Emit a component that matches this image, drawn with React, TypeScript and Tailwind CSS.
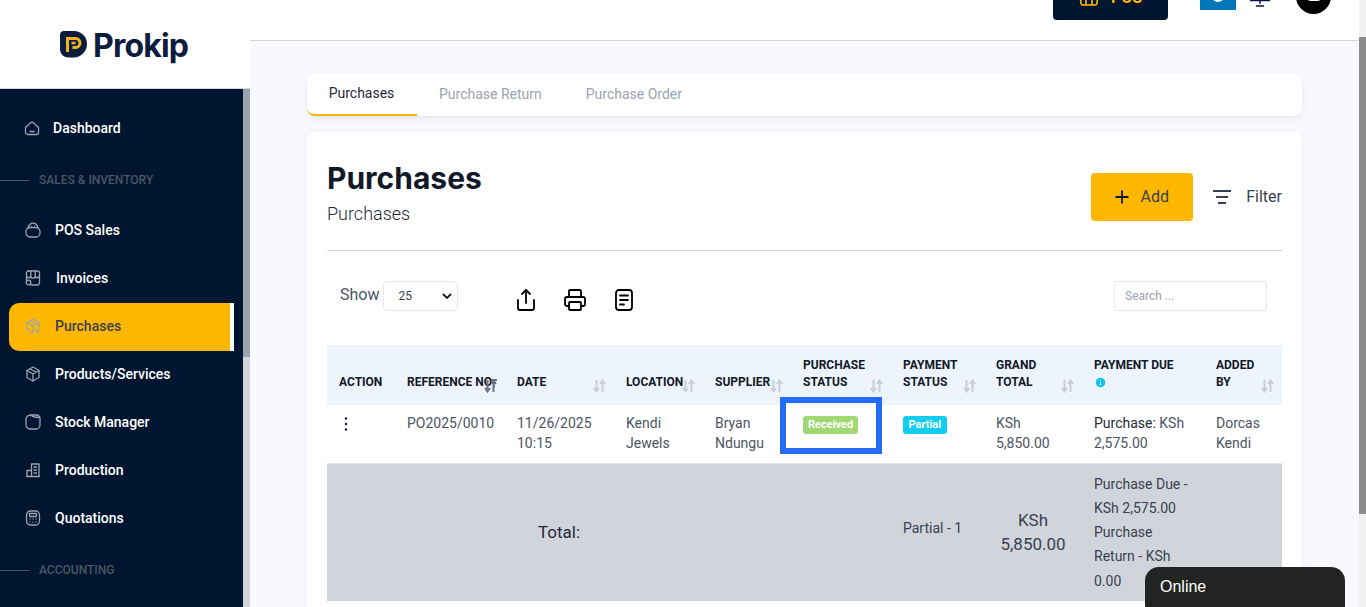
import React from "react";
import { Share, Printer, Plus, Info } from "lucide-react";

const roboto = { fontFamily: "Roboto, sans-serif" };

function Ico({ children }: { children: React.ReactNode }) {
  return (
    <svg width="16" height="16" viewBox="0 0 16 16" fill="none" stroke="currentColor" strokeWidth="1.300" strokeLinecap="round" strokeLinejoin="round" className="shrink-0">
      {children}
    </svg>
  );
}

const HomeI = () => <Ico><path d="M1.500 7.500 6.500 2.800a2.200 2.200 0 0 1 3 0l5 4.700V12.500a2 2 0 0 1-2 2h-9a2 2 0 0 1-2-2Z" /><path d="M6 11.500h4" /></Ico>;
const BagI = () => <Ico><rect x="1" y="5.500" width="14" height="9.500" rx="4" /><path d="M3 6.500C3.500 3 5.500 1.200 8 1.200s4.500 1.800 5 5.300" /><path d="M6.300 3.800h.01M9.700 3.800h.01" /></Ico>;
const StoreI = () => <Ico><path d="M3.500 1h9a2 2 0 0 1 2 2v9.500a2.500 2.500 0 0 1-2.500 2.500H6" /><path d="M1.500 10V3a2 2 0 0 1 2-2" /><path d="M1.500 6a2.200 2.200 0 0 0 4.300 0 2.200 2.200 0 0 0 4.400 0 2.200 2.200 0 0 0 4.300 0M5.800 1v5M10.200 1v5" /><circle cx="3.500" cy="12.500" r="2.300" /></Ico>;
const BoxPlusI = () => <Ico><path d="M8 1 14 4.500v5.500M8 1 2 4.500v7L8 15V8M2 4.500 8 8l6-3.500M5 2.800l6 3.500" /><path d="M12.500 11.500v3.400M10.800 13.200h3.400" /></Ico>;
const BoxI = () => <Ico><path d="M8 1 14 4.500v7L8 15 2 11.500v-7Z" /><path d="M2 4.500 8 8l6-3.500M8 8v7M5 2.800l6 3.500" /></Ico>;
const FolderI = () => <Ico><path d="M1 5.500A4.500 4.500 0 0 1 5.500 1h6A3.500 3.500 0 0 1 15 4.500V11a4 4 0 0 1-4 4H5a4 4 0 0 1-4-4Z" /><path d="M6 1c1.500 1.800 3 2.500 8.500 2.500" /></Ico>;
const BuildI = () => <Ico><path d="M1.500 14.500h13M2 14.500V8.500h4.500v6M6.500 14.500V2h7.500v12.500" /><path d="M9 5h2.500M9 8h2.500M9 11h2.500" /></Ico>;
const CalcI = () => <Ico><rect x="1.500" y="1" width="13" height="14" rx="4" /><rect x="4.500" y="3.500" width="7" height="3" rx=".6" /><path d="M5 9h.01M8 9h.01M11 9h.01M5 12h.01M8 12h.01M11 12h.01" /></Ico>;

const items = [
  { label: "POS Sales", icon: <BagI />, active: false },
  { label: "Invoices", icon: <StoreI />, active: false, gap: "gap-[15px]" },
  { label: "Purchases", icon: <BoxPlusI />, active: true },
  { label: "Products/Services", icon: <BoxI />, active: false },
  { label: "Stock Manager", icon: <FolderI />, active: false },
  { label: "Production", icon: <BuildI />, active: false },
  { label: "Quotations", icon: <CalcI />, active: false },
];

function SectionLabel({ text, className }: { text: string; className: string }) {
  return (
    <div className={`flex items-center gap-[10px] ${className}`}>
      <span className="h-px w-[29px] bg-[#4b5563]" />
      <span className="text-[12px] font-medium leading-[16px] text-[#4b5563]">{text}</span>
    </div>
  );
}

function Sidebar() {
  return (
    <aside className="flex h-full w-[250px] shrink-0 flex-col" style={roboto}>
      <div className="flex h-[89px] shrink-0 items-start gap-[6px] border-b border-[#d1d5db] bg-white pl-[60px] pt-[24px]">
        <svg width="27" height="27" viewBox="0 0 27 27" className="mt-[7px] shrink-0">
          <path d="M4 0h10a13 13 0 0 1 13 13 13.500 13.500 0 0 1-13.500 13.500H9C4 26.500 0 23 0 18V4a4 4 0 0 1 4-4Z" fill="#0b1c3d" />
          <path d="M7.500 21V7.500h8a4.500 4.500 0 0 1 0 9h-3" fill="none" stroke="#f0b323" strokeWidth="3" />
          <path d="M11.500 12h4" stroke="#f0b323" strokeWidth="2.500" />
        </svg>
        <span className="text-[32px] font-bold leading-[44px] tracking-[-0.8px] text-[#0b1c3d]" style={{ fontFamily: "Inter, sans-serif" }}>Prokip</span>
      </div>
      <div className="flex min-h-0 flex-1">
        <nav className="flex-1 overflow-hidden bg-[#00152f]">
          <div className="flex items-center gap-[13px] pl-[24px] pt-[29px] text-[14px] font-medium leading-[20px] text-white">
            <span className="text-[#9ca3af]"><HomeI /></span>
            Dashboard
          </div>
          <SectionLabel text="SALES & INVENTORY" className="mt-[34px]" />
          <ul className="mt-[18px] flex flex-col">
            {items.map((it) =>
              it.active ? (
                <li key={it.label} className="-mb-[1px] ml-[9px] mr-[9px] mt-[1px] flex h-[48px] items-center gap-[14px] rounded-l-[10px] border-r-[4px] border-white bg-[#ffb700] pb-[2px] pl-[16px] text-[14px] font-medium text-[#374151]">
                  <span className="text-[#9ca3af]">{it.icon}</span>
                  {it.label}
                </li>
              ) : (
                <li key={it.label} className={`ml-[25px] flex h-[48px] items-center ${it.gap ?? "gap-[14px]"} text-[14px] font-medium text-white`}>
                  <span className="text-[#9ca3af]">{it.icon}</span>
                  {it.label}
                </li>
              )
            )}
          </ul>
          <SectionLabel text="ACCOUNTING" className="mt-[20px]" />
        </nav>
        <div className="flex w-[7px] flex-col bg-[#d1d5db]">
          <div className="h-[268px] bg-[#9ca3af]" />
        </div>
      </div>
    </aside>
  );
}

function TopBar() {
  return (
    <header className="flex h-[41px] shrink-0 items-end overflow-hidden border-b border-[#d1d5db] bg-white">
      <div className="ml-auto mb-[20px] flex h-[48px] w-[115px] items-end justify-center gap-[12px] rounded-[4px] bg-[#00152f] pb-[14px]">
        <svg width="20" height="20" viewBox="0 0 20 20" fill="none" stroke="#ffb700" strokeWidth="1.600">
          <path d="M1 9h18l-1 8a2 2 0 0 1-2 2H4a2 2 0 0 1-2-2ZM7 9v10M13 9v10" />
        </svg>
        <span className="text-[16px] font-bold leading-[16px] text-[#ffb700]" style={roboto}>POS</span>
      </div>
      <div className="mb-[30px] ml-[32px] flex h-[36px] w-[36px] items-end justify-center bg-[#0077b6] pb-[8px]">
        <span className="h-[12px] w-[12px] rounded-full bg-white" />
      </div>
      <svg width="20" height="20" viewBox="0 0 20 20" fill="none" stroke="#0b1550" strokeWidth="1.400" className="mb-[33px] ml-[14px]">
        <path d="M4 8v5h12V8M0 13.500h20M10 13.500v3.500M6 19h8" />
      </svg>
      <div className="mb-[26px] ml-[26px] flex h-[35px] w-[35px] items-start justify-center overflow-hidden rounded-full bg-black pt-[13px]">
        <span className="h-[9px] w-[18px] rounded-b-[6px] bg-white" />
      </div>
      <div className="w-[28px] shrink-0" />
    </header>
  );
}

function SortIcon({ sorted = false }: { sorted?: boolean }) {
  return (
    <svg width="13" height="14" viewBox="0 0 13 14" fill="none" stroke={sorted ? "#6b7280" : "#c9ced6"} strokeWidth="2" className="absolute bottom-[12px] right-[8px]">
      <path d="M3.500 1v11M1 9l2.500 3.500L6 9" />
      <path d="M9.500 13V2M7 5l2.500-3.500L12 5" />
      {sorted && <path d="M7 1h6M8 4h4M9 7h2" />}
    </svg>
  );
}

const heads: { label: React.ReactNode; w: string; noSort?: boolean; sorted?: boolean }[] = [
  { label: "ACTION", w: "w-[68px]", noSort: true },
  { label: "REFERENCE NO", w: "w-[110px]", sorted: true },
  { label: "DATE", w: "w-[109px]" },
  { label: "LOCATION", w: "w-[89px]" },
  { label: "SUPPLIER", w: "w-[88px]" },
  { label: <>PURCHASE<br />STATUS</>, w: "w-[100px]" },
  { label: <>PAYMENT<br />STATUS</>, w: "w-[93px]" },
  { label: <>GRAND<br />TOTAL</>, w: "w-[98px]" },
  { label: <>PAYMENT DUE<br /><Info size={13} fill="#10c4ee" stroke="#fff" className="inline-block" /></>, w: "w-[122px]", noSort: true },
  { label: <>ADDED<br />BY</>, w: "w-[78px]" },
];

function PurchaseTable() {
  const td = "px-[12px] pt-[8px] pb-[9px] align-top";
  return (
    <div className="relative mt-[34px]">
      <table className="w-[955px] table-fixed border-collapse text-[14px] leading-[20px] text-[#4b5563]">
        <thead>
          <tr className="h-[60px] bg-[#eef4fd]">
            {heads.map((h, i) => (
              <th key={i} className={`${h.w} relative whitespace-nowrap px-[12px] pb-[14px] text-left align-bottom text-[12px] font-bold leading-[17px] text-[#111827]`}>
                {h.label}
                {!h.noSort && <SortIcon sorted={h.sorted} />}
              </th>
            ))}
          </tr>
        </thead>
        <tbody>
          <tr className="h-[58px] border-b border-[#e5e7eb]">
            <td className={td}>
              <svg width="4" height="16" viewBox="0 0 4 16" className="ml-[5px] mt-[3px] text-[#0b1550]" fill="currentColor">
                <circle cx="2" cy="2.500" r="1.200" /><circle cx="2" cy="8" r="1.200" /><circle cx="2" cy="13.500" r="1.200" />
              </svg>
            </td>
            <td className={td}>PO2025/0010</td>
            <td className={td}>11/26/2025<br />10:15</td>
            <td className={td}>Kendi<br />Jewels</td>
            <td className={td}>Bryan<br />Ndungu</td>
            <td className={td}>
              <span className="mt-[3px] block w-fit rounded-[3px] bg-[#a0d872] px-[5px] text-[11px] font-bold leading-[18px] text-white">Received</span>
            </td>
            <td className={td}>
              <span className="mt-[3px] block w-fit rounded-[3px] bg-[#12cdf0] px-[5.5px] text-[11px] font-bold leading-[18px] text-white">Partial</span>
            </td>
            <td className={td}>KSh<br />5,850.00</td>
            <td className={td}><span className="text-[#1f2937]">Purchase:</span> KSh 2,575.00</td>
            <td className={td}>Dorcas<br />Kendi</td>
          </tr>
          <tr className="h-[138px] bg-[#d1d5db] text-[#374151]">
            <td colSpan={5} className="text-center text-[17px] text-[#1f2937]">Total:</td>
            <td />
            <td className="px-[12px] pb-[8px]">Partial - 1</td>
            <td className="text-center text-[17px] leading-[24px]">KSh<br />5,850.00</td>
            <td className="px-[12px] leading-[24.3px]">
              Purchase Due - KSh 2,575.00
              <br />
              Purchase Return - KSh 0.00
            </td>
            <td />
          </tr>
        </tbody>
      </table>
      <div className="absolute left-[453px] top-[52px] h-[57px] w-[102px] border-[6px] border-[#256bf5]" />
    </div>
  );
}

function Main() {
  return (
    <main className="flex min-w-0 flex-1 flex-col" style={roboto}>
      <TopBar />
      <div className="min-h-0 flex-1 overflow-hidden bg-[#f8f9fe] px-[57px] pt-[33px]">
        <div className="flex h-[42px] items-stretch rounded-[8px] bg-white text-[14px] shadow-[0_2px_6px_rgba(0,0,0,0.08)]">
          <div className="flex w-[110px] items-start justify-center rounded-bl-[8px] border-b-[2px] border-[#ffb700] pr-[1px] pt-[10px] leading-[18px] text-[#1f2937]">Purchases</div>
          <div className="ml-[22px] pt-[11px] leading-[18px] text-[#9ca3af]">Purchase Return</div>
          <div className="ml-[44px] pt-[11px] leading-[18px] text-[#9ca3af]">Purchase Order</div>
        </div>
        <section className="mt-[16px] h-[560px] rounded-[8px] bg-white px-[20px] pt-[26px] shadow-[0_2px_6px_rgba(0,0,0,0.06)]">
          <div className="flex h-[93px] items-start border-b border-[#d1d5db]">
            <div>
              <h1 className="text-[30px] font-bold leading-[40px] text-[#111827]" style={{ fontFamily: "Inter, sans-serif" }}>Purchases</h1>
              <p className="mt-[4px] text-[18px] font-light leading-[24px] text-[#1f2937]">Purchases</p>
            </div>
            <div className="ml-auto mt-[15px] flex items-center">
              <button className="flex h-[48px] w-[102px] items-center justify-center gap-[8px] rounded-[4px] bg-[#ffb700] pr-[3px] text-[16px] text-[#374151]">
                <Plus size={20} strokeWidth={2.200} className="text-[#111827]" />
                Add
              </button>
              <svg width="18" height="14" viewBox="0 0 18 14" fill="none" stroke="#374151" strokeWidth="2" className="ml-[20px]">
                <path d="M0 1h18M3 7h12M5 13h8" />
              </svg>
              <span className="ml-[15px] text-[16px] text-[#374151]">Filter</span>
            </div>
          </div>
          <div className="mt-[30px] flex h-[30px] items-center pl-[13px] pr-[15px]">
            <span className="mb-[2px] text-[16px] text-[#4b5563]">Show</span>
            <div className="ml-[4px] flex h-[30px] w-[75px] items-center justify-between rounded-[4px] border border-[#e5e7eb] pl-[14px] pr-[5px] text-[12px] text-[#374151]">
              25
              <svg width="10" height="6" viewBox="0 0 10 6" fill="none" stroke="#111827" strokeWidth="1.800"><path d="m1 1 4 4 4-4" /></svg>
            </div>
            <Share size={24} strokeWidth={1.800} className="ml-[56px] mt-[8px] text-black" />
            <Printer size={24} strokeWidth={1.800} className="ml-[25px] mt-[8px] text-black" />
            <svg width="24" height="24" viewBox="0 0 24 24" fill="none" stroke="black" strokeWidth="1.800" strokeLinecap="round" className="ml-[25px] mt-[8px]">
              <rect x="4" y="2" width="16" height="20" rx="3" />
              <path d="M8 7.500h8M8 12h8M8 16.500h4" />
            </svg>
            <div className="ml-auto flex h-[30px] w-[153px] items-center rounded-[2px] border border-[#e5e7eb] pl-[10px] text-[12px] text-[#9ca3af]">Search ...</div>
          </div>
          <PurchaseTable />
        </section>
      </div>
    </main>
  );
}

export default function App() {
  return (
    <div className="relative flex h-[607px] w-[1366px] overflow-hidden bg-white">
      <Sidebar />
      <Main />
      <div className="flex h-full w-[7px] shrink-0 flex-col bg-[#f1f1f1]">
        <div className="mt-[37px] h-[477px] bg-[#8b8b8b]" />
      </div>
      <div className="absolute bottom-0 left-[1145px] flex h-[40px] w-[200px] items-start rounded-t-[14px] bg-[#222422] pl-[15px] pt-[10px] text-[16px] leading-[20px] text-white" style={{ fontFamily: "Liberation Sans, sans-serif" }}>
        Online
      </div>
    </div>
  );
}
